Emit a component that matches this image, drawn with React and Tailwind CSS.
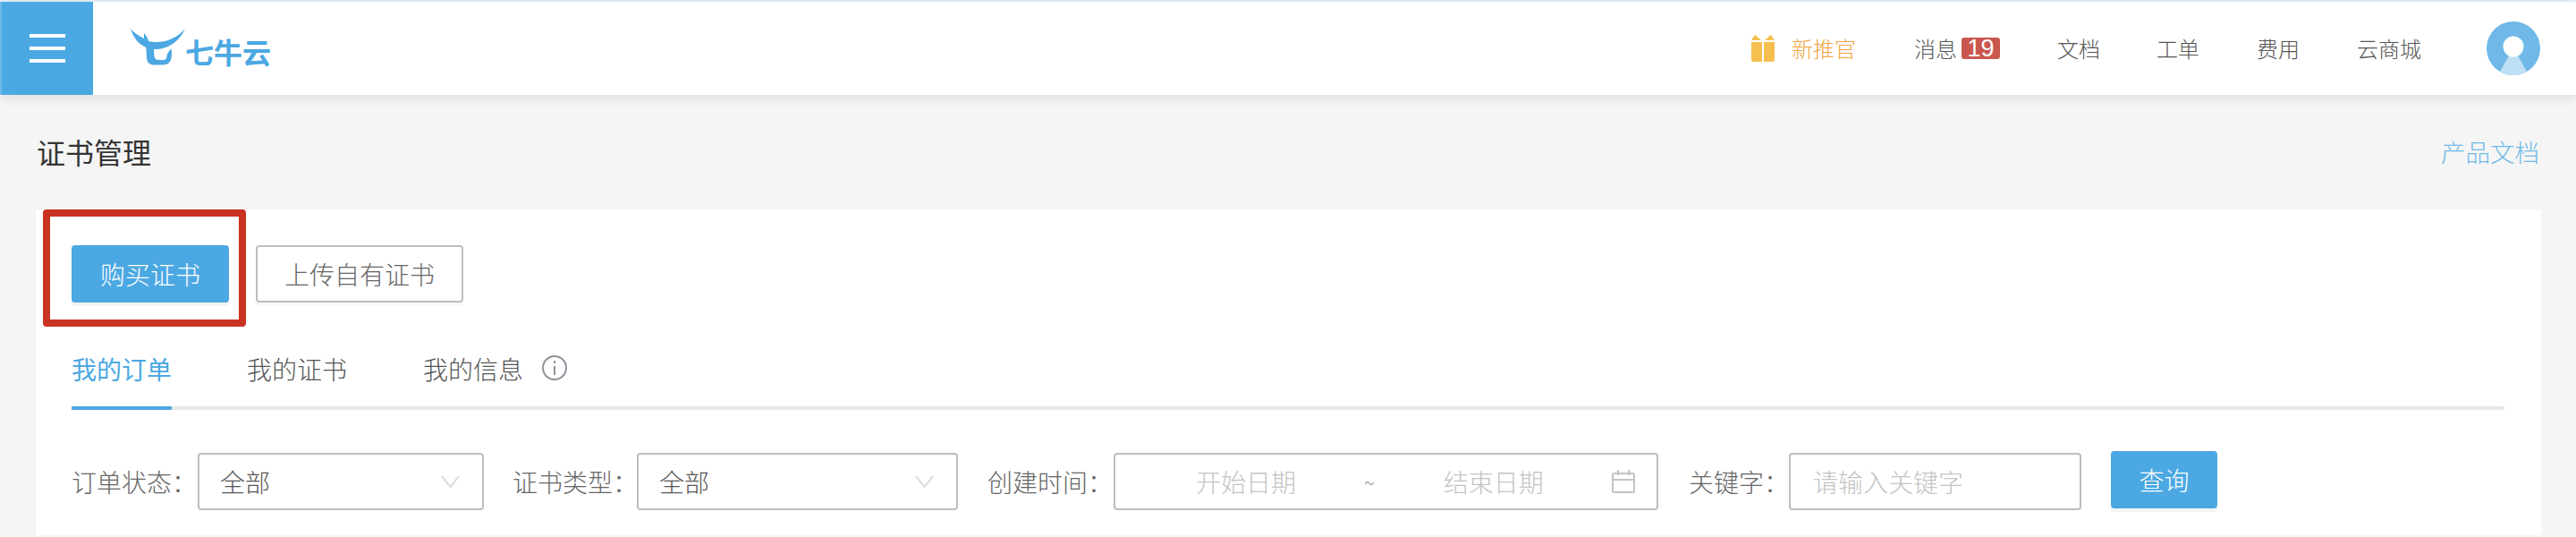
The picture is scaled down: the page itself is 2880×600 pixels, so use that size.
import React from 'react'

const font = { fontFamily: '"Noto Sans CJK SC", "Noto Sans", sans-serif' }

function Logo() {
  return (
    <div className="ml-[41px] flex items-center">
      <svg width="64" height="42" viewBox="145 32 64 42" className="-mt-[2px]">
        <path fill="#4ba8e2" d="M146 32 C150 37 155 40 161 43 L161 37 C163 39 165 42 166 46 C178 49 195 46 207 32 C200 48 185 56 172 55 C160 54 150 46 146 32 Z" />
        <path fill="#4ba8e2" d="M163 50 L172 54 L172.5 63 C173 66 175 67 178 67 L183 67 C186 67 186.5 64 187 60 L191.5 54 L192 60 C192 68 189 72.5 182 72.5 L172 72.5 C166 72.5 164 69 164 63 Z" />
      </svg>
      <span className="-ml-[2px] text-[32px] leading-none font-bold text-[#4ba8e2] mt-[6px]">七牛云</span>
    </div>
  )
}

function Gift() {
  return (
    <svg width="26" height="30" viewBox="0 0 26 30">
      <path fill="#f5c04f" d="M0 8 H12 V30 H2 Q0 30 0 28 Z M14 8 H26 V28 Q26 30 24 30 H14 Z" />
      <path fill="#f5c04f" d="M4 0 L0 6 H11 L4.5 0 Z M22 0 L26 6 H15 L21.5 0 Z" />
    </svg>
  )
}

function Avatar() {
  return (
    <svg width="60" height="60" viewBox="0 0 60 60">
      <circle cx="30" cy="30" r="30" fill="#6fb8e8" />
      <path fill="#bfdff5" d="M25 38 L15 56 A30 30 0 0 0 45 56 L35 38 Z" />
      <circle cx="30" cy="28" r="11.5" fill="#fff" />
    </svg>
  )
}

function Header() {
  return (
    <header className="relative z-10 h-[104px] shrink-0 bg-white flex items-center shadow-[0_2px_14px_rgba(0,0,0,0.12)]">
      <div className="w-[104px] h-full bg-[#4ba8e2] border-l-2 border-[#6db9e8] flex flex-col items-center justify-center gap-[10px]">
        <span className="block w-[40px] h-[4px] bg-white" />
        <span className="block w-[40px] h-[4px] bg-white" />
        <span className="block w-[40px] h-[4px] bg-white" />
      </div>
      <Logo />
      <nav className="ml-auto flex items-center text-[24px] font-light text-[#555]">
        <div className="flex items-center gap-[19px] text-[#f2a33c]">
          <Gift />
          <span>新推官</span>
        </div>
        <div className="flex items-center ml-[65px]">
          <span>消息</span>
          <span className="ml-[5px] w-[43px] h-[24px] rounded-[3px] bg-[#c9574f] text-white text-[27px] leading-[24px] text-center font-normal" style={{ fontFamily: '"Liberation Sans", sans-serif' }}>19</span>
        </div>
        <span className="ml-[64px]">文档</span>
        <span className="ml-[63px]">工单</span>
        <span className="ml-[64px]">费用</span>
        <span className="ml-[64px]">云商城</span>
        <div className="ml-[73px] mr-[40px]"><Avatar /></div>
      </nav>
    </header>
  )
}

function Chevron({ className }) {
  return (
    <svg width="21" height="14" viewBox="0 0 21 14" className={className}>
      <path d="M1 1 L10.5 13 L20 1" fill="none" stroke="#d9d9d9" strokeWidth="2" />
    </svg>
  )
}

function Select({ width }) {
  return (
    <div className={`${width} h-[64px] border-2 border-[#bdbdbd] rounded-[4px] flex items-center justify-between pl-[23px] pr-[25px]`}>
      <span className="text-[#555]">全部</span>
      <Chevron />
    </div>
  )
}

function Calendar() {
  return (
    <svg width="26" height="26" viewBox="0 0 26 26" fill="none" stroke="#c4c4c4" strokeWidth="2">
      <rect x="1" y="4" width="24" height="21" rx="1" />
      <path d="M1 11 H25 M7 0 V6 M19 0 V6" />
    </svg>
  )
}

function Filters() {
  return (
    <div className="mt-[48px] flex items-center text-[28px] font-light text-[#666] whitespace-nowrap">
      <span className="w-[141px]">订单状态：</span>
      <Select width="w-[320px]" />
      <span className="ml-[32px] w-[139px]">证书类型：</span>
      <Select width="w-[359px]" />
      <span className="ml-[33px] w-[141px]">创建时间：</span>
      <div className="w-[609px] h-[64px] border-2 border-[#bdbdbd] rounded-[4px] flex items-center text-[#c4c4c4]">
        <span className="ml-[90px]">开始日期</span>
        <span className="ml-[76px] text-[#888] text-[22px]">~</span>
        <span className="ml-[77px]">结束日期</span>
        <span className="ml-auto mr-[24px] flex"><Calendar /></span>
      </div>
      <span className="ml-[34px] w-[112px]">关键字：</span>
      <div className="w-[327px] h-[64px] border-2 border-[#bdbdbd] rounded-[4px] flex items-center pl-[25px] text-[#c4c4c4]">
        请输入关键字
      </div>
      <button className="ml-[33px] w-[119px] h-[64px] -mt-[4px] rounded-[4px] bg-[#4ba8e2] text-white shadow-[0_4px_0_#f3f3f3]">查询</button>
    </div>
  )
}

export default function App() {
  return (
    <div className="w-[2880px] h-[600px] overflow-hidden bg-[#f5f5f5] flex flex-col" style={font}>
      <div className="h-[2px] shrink-0 bg-[#e6f3fb]" />
      <Header />
      <div className="h-[128px] shrink-0 flex items-center justify-between pl-[41px] pr-[41px]">
        <h1 className="text-[32px] text-[#333] -mt-[2px]">证书管理</h1>
        <a className="text-[27.5px] font-light text-[#6fb9e8]">产品文档</a>
      </div>
      <main className="relative ml-[40px] w-[2801px] h-[364px] shrink-0 bg-white px-[40px] pt-[40px]">
        <div className="flex gap-[30px] text-[28px] font-light">
          <button className="w-[176px] h-[64px] rounded-[4px] bg-[#4ba8e2] text-white shadow-[0_4px_0_#f3f3f3]">购买证书</button>
          <button className="w-[232px] h-[64px] rounded-[4px] border-2 border-[#bdbdbd] text-[#666] shadow-[0_4px_0_#f8f8f8]">上传自有证书</button>
        </div>
        <div className="mt-[48px] w-[2720px] h-[72px] border-b-4 border-[#e8e8e8] flex text-[28px] font-light text-[#555]">
          <div className="w-[112px] h-[72px] border-b-4 border-[#4ba8e2] text-[#4ba8e2] font-normal leading-[52px]">我的订单</div>
          <div className="ml-[84px] leading-[52px]">我的证书</div>
          <div className="ml-[85px] flex items-start leading-[52px]">
            <span>我的信息</span>
            <span className="ml-[21px] mt-[11px] w-[28px] h-[28px] rounded-full border-2 border-[#8f939b] flex items-center justify-center">
              <svg width="6" height="16" viewBox="0 0 6 16"><path d="M3 0 V3 M3 6 V16" stroke="#8f939b" strokeWidth="2" /></svg>
            </span>
          </div>
        </div>
        <Filters />
        {/* annotation box drawn over the screenshot */}
        <div className="absolute left-[8px] top-0 w-[227px] h-[131px] border-[8px] border-[#c93322] rounded-[4px]" />
      </main>
    </div>
  )
}
